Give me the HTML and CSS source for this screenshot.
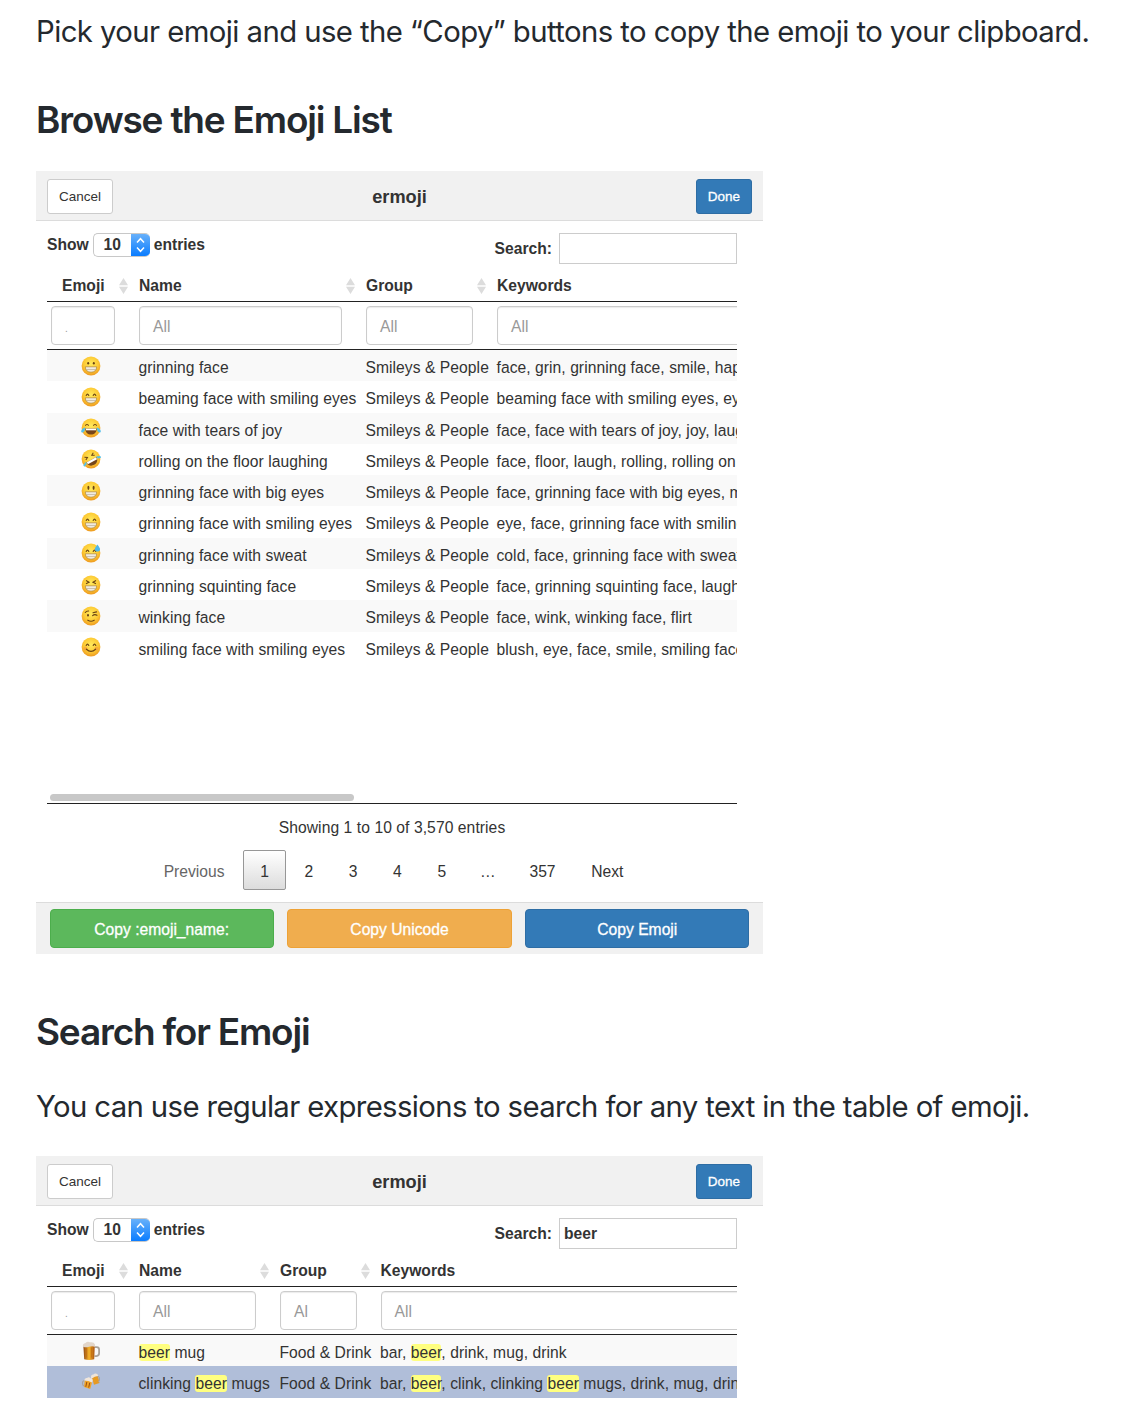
FILE: index.html
```html
<!DOCTYPE html>
<html lang="en">
<head>
<meta charset="utf-8">
<title>ermoji</title>
<link rel="stylesheet" href="styles.css">
</head>
<body>
<svg class="defs" width="0" height="0" aria-hidden="true">
  <defs>
    <radialGradient id="skin" cx=".5" cy=".38" r=".62"><stop offset="0" stop-color="#ffe95c"/><stop offset=".6" stop-color="#fdcb35"/><stop offset="1" stop-color="#ee9a20"/></radialGradient>
    <linearGradient id="ale" x1="0" x2="1"><stop offset="0" stop-color="#8f4512"/><stop offset=".5" stop-color="#f6b52b"/><stop offset="1" stop-color="#a8500f"/></linearGradient>
    <symbol id="face" viewBox="0 0 20 20"><circle cx="10" cy="10" r="9.4" fill="url(#skin)"/></symbol>
    <symbol id="grin" viewBox="0 0 20 20"><use href="#face"/><path d="M4.300 10.800h11.400c0 3.600-2.400 5.400-5.700 5.400s-5.700-1.800-5.700-5.400z" fill="#f1ece0" stroke="#a5752a" stroke-width=".6"/><path d="M5 13.500h10" stroke="#b9ad98" stroke-width=".7"/></symbol>
    <symbol id="arcs" viewBox="0 0 20 20"><path d="M5.200 8.400q1.300-2.500 2.600 0M12.200 8.400q1.300-2.500 2.600 0" fill="none" stroke="#6a4314" stroke-width="1.100" stroke-linecap="round"/></symbol>
    <symbol id="e1" viewBox="0 0 20 20"><use href="#grin"/><ellipse cx="7.200" cy="7.300" rx="1" ry="1.300" fill="#6a4314"/><ellipse cx="12.800" cy="7.300" rx="1" ry="1.300" fill="#6a4314"/></symbol>
    <symbol id="e2" viewBox="0 0 20 20"><use href="#grin"/><use href="#arcs"/></symbol>
    <symbol id="e3" viewBox="0 0 20 20"><use href="#face"/><path d="M4.300 10.500h11.400c0 4-2.400 6-5.700 6s-5.700-2-5.700-6z" fill="#76451a"/><path d="M5 10.600h10v1.700H5z" fill="#fff"/><path d="M4 7.500q2-2.200 4 0M12 7.500q2-2.200 4 0" fill="none" stroke="#6a4314" stroke-width="1"/><path d="M4.500 9.500C1.500 10-.2 12 .3 14c1.500 1.500 3.600.2 4.200-4.500zM15.500 9.500c3 .5 4.700 2.500 4.200 4.500-1.500 1.500-3.600.2-4.200-4.500z" fill="#55bfe9"/></symbol>
    <symbol id="e4" viewBox="0 0 20 20"><use href="#face"/><g transform="rotate(-28 10 10)"><path d="M4.300 10.800h11.400c0 3.800-2.400 5.800-5.700 5.800s-5.700-2-5.700-5.800z" fill="#76451a"/><path d="M4.800 10.800h10.400v2.300H4.800z" fill="#fff"/><path d="M5 5.500l2.600 1.500L5 8.500M15 5.500L12.400 7 15 8.500" fill="none" stroke="#6a4314" stroke-width="1"/><path d="M4.500 10L.3 11.800.5 13.600l3-.8zM15.500 10l4.200 1.800-.2 1.800-3-.8z" fill="#55bfe9"/></g></symbol>
    <symbol id="e5" viewBox="0 0 20 20"><use href="#grin"/><ellipse cx="7.400" cy="6.800" rx="1" ry="2.100" fill="#6a4314"/><ellipse cx="12.600" cy="6.800" rx="1" ry="2.100" fill="#6a4314"/></symbol>
    <symbol id="e7" viewBox="0 0 20 20"><use href="#grin"/><use href="#arcs"/><path d="M16.500 1.500c-1.600 2.300-2.900 3.500-2.700 5.200.3 2.100 4.300 2.600 5.200.2.500-1.800-1.200-3-2.500-5.400z" fill="#4fb8ea"/></symbol>
    <symbol id="e8" viewBox="0 0 20 20"><use href="#grin"/><path d="M5 5.600l3 1.600-3 1.500M15 5.600l-3 1.600 3 1.500" fill="none" stroke="#6a4314" stroke-width="1.100"/></symbol>
    <symbol id="e9" viewBox="0 0 20 20"><use href="#face"/><ellipse cx="7" cy="9.200" rx="1" ry="1.300" fill="#6a4314"/><path d="M4.300 6.500Q5.500 4.800 7.600 5M12 6.800l3.600-.9M11.600 9.700q2-2 4.400-.4M6.800 14.200q3.200 2 6.400 0" fill="none" stroke="#6a4314" stroke-width="1.100" stroke-linecap="round"/></symbol>
    <symbol id="e10" viewBox="0 0 20 20"><use href="#face"/><circle cx="4.500" cy="11.500" r="2" fill="#f58e3c" opacity=".5"/><circle cx="15.500" cy="11.500" r="2" fill="#f58e3c" opacity=".5"/><use href="#arcs"/><path d="M5.400 12.200q4.600 4.400 9.200 0" fill="none" stroke="#6a4314" stroke-width="1.200" stroke-linecap="round"/></symbol>
    <symbol id="mug" viewBox="0 0 20 20"><path d="M13.500 6.200h2.200q2.400 0 2.400 2.500v3.600q0 2.500-2.600 2.800h-2" fill="none" stroke="#aaa39b" stroke-width="1.800"/><path d="M2.300 4h11.500l-.6 14.300q-5 1.400-10 0z" fill="url(#ale)"/><path d="M5.600 6.500v10M10.400 6.500v10" stroke="#c26c12" stroke-width=".8"/><path d="M2 5.800Q1.300 2.500 4.500 2 6.500 0 9 1.300q4-.6 5 2.200v2.300q-3-1.200-6 0-3 1-6 0z" fill="#e2d6ca"/></symbol>
    <symbol id="mugs" viewBox="0 0 20 20"><path d="M10.500 4.500l6-2 2 8.500-5.500 1.800z" fill="#e79a22"/><path d="M16.200 4q2.600.3 2.400 3t-1.500 3" fill="none" stroke="#a9a39d" stroke-width="1"/><path d="M9.800 5.500Q10 2.500 12.300 2.600 14 .8 15.500 1.800q2 .2 1.500 2.200-3.200.3-6.500 2.800z" fill="#efe4d8"/><path d="M3.800 8l7.400 1.700-2 7.300-6.200-1.900z" fill="#f0a326"/><path d="M5.800 10l-1 4.800M8.700 10.800l-1 4.800" stroke="#9b4f10" stroke-width="1"/><path d="M3.500 8.500q-2.300.5-2 3t1.700 2.500" fill="none" stroke="#a9a39d" stroke-width="1.100"/><path d="M3.300 8.500Q3.500 5.600 6 6q2-1.400 3.400.2 2.700.2 2.200 2.800l-.6 1.500Q7.500 8.600 3.300 8.500z" fill="#f1e6da"/></symbol>
    <symbol id="sort" viewBox="0 0 9 16"><path d="M0 7.300L4.500 0 9 7.300zM0 8.800h9L4.500 16z" fill="#dcdcdc"/></symbol>
    <symbol id="updown" viewBox="0 0 19 23"><path d="M6 9l3.500-3.800L13 9M6 14l3.500 3.800L13 14" fill="none" stroke="#fff" stroke-width="1.500"/></symbol>
  </defs>
</svg>

<main class="page">
  <p class="lead lead-copy">Pick your emoji and use the “Copy” buttons to copy the emoji to your clipboard.</p>
  <h2 class="title title-browse">Browse the Emoji List</h2>

  <section class="gadget browse">
    <header class="gadget-head">
      <button class="btn">Cancel</button>
      <h3 class="gadget-title">ermoji</h3>
      <button class="btn btn-done">Done</button>
    </header>
    <div class="gadget-body">
      <div class="controls">
        <div class="length">Show <span class="select"><span class="select-value">10</span><svg class="select-arrow"><use href="#updown"/></svg></span> entries</div>
        <div class="search">Search: <div class="search-box"></div></div>
      </div>
      <div class="row head">
        <div class="th th-emoji">Emoji<svg class="sort"><use href="#sort"/></svg></div>
        <div class="th">Name<svg class="sort"><use href="#sort"/></svg></div>
        <div class="th">Group<svg class="sort"><use href="#sort"/></svg></div>
        <div class="th">Keywords</div>
      </div>
      <div class="row filters">
        <div class="filter filter-emoji"><span class="dot">.</span></div>
        <div class="filter">All</div>
        <div class="filter">All</div>
        <div class="filter filter-wide">All</div>
      </div>
      <div class="rows">
        <div class="row item"><svg class="emoji"><use href="#e1"/></svg><span>grinning face</span><span>Smileys &amp; People</span><span>face, grin, grinning face, smile, happy</span></div>
        <div class="row item"><svg class="emoji"><use href="#e2"/></svg><span>beaming face with smiling eyes</span><span>Smileys &amp; People</span><span>beaming face with smiling eyes, eye</span></div>
        <div class="row item"><svg class="emoji"><use href="#e3"/></svg><span>face with tears of joy</span><span>Smileys &amp; People</span><span>face, face with tears of joy, joy, laugh</span></div>
        <div class="row item"><svg class="emoji"><use href="#e4"/></svg><span>rolling on the floor laughing</span><span>Smileys &amp; People</span><span>face, floor, laugh, rolling, rolling on</span></div>
        <div class="row item"><svg class="emoji"><use href="#e5"/></svg><span>grinning face with big eyes</span><span>Smileys &amp; People</span><span>face, grinning face with big eyes, mouth</span></div>
        <div class="row item"><svg class="emoji"><use href="#e2"/></svg><span>grinning face with smiling eyes</span><span>Smileys &amp; People</span><span>eye, face, grinning face with smiling</span></div>
        <div class="row item"><svg class="emoji"><use href="#e7"/></svg><span>grinning face with sweat</span><span>Smileys &amp; People</span><span>cold, face, grinning face with sweat</span></div>
        <div class="row item"><svg class="emoji"><use href="#e8"/></svg><span>grinning squinting face</span><span>Smileys &amp; People</span><span>face, grinning squinting face, laugh</span></div>
        <div class="row item"><svg class="emoji"><use href="#e9"/></svg><span>winking face</span><span>Smileys &amp; People</span><span>face, wink, winking face, flirt</span></div>
        <div class="row item"><svg class="emoji"><use href="#e10"/></svg><span>smiling face with smiling eyes</span><span>Smileys &amp; People</span><span>blush, eye, face, smile, smiling face</span></div>
      </div>
      <div class="scrollbar"><div class="thumb"></div></div>
      <div class="info">Showing 1 to 10 of 3,570 entries</div>
      <nav class="pages">
        <span class="pg pg-off">Previous</span><span class="pg pg-on">1</span><span class="pg">2</span><span class="pg">3</span><span class="pg">4</span><span class="pg">5</span><span class="pg pg-dots">…</span><span class="pg">357</span><span class="pg">Next</span>
      </nav>
    </div>
    <footer class="gadget-foot">
      <button class="copy copy-name">Copy :emoji_name:</button>
      <button class="copy copy-unicode">Copy Unicode</button>
      <button class="copy copy-emoji">Copy Emoji</button>
    </footer>
  </section>

  <h2 class="title title-search">Search for Emoji</h2>
  <p class="lead lead-regex">You can use regular expressions to search for any text in the table of emoji.</p>

  <section class="gadget found">
    <header class="gadget-head">
      <button class="btn">Cancel</button>
      <h3 class="gadget-title">ermoji</h3>
      <button class="btn btn-done">Done</button>
    </header>
    <div class="gadget-body">
      <div class="controls">
        <div class="length">Show <span class="select"><span class="select-value">10</span><svg class="select-arrow"><use href="#updown"/></svg></span> entries</div>
        <div class="search">Search: <div class="search-box">beer</div></div>
      </div>
      <div class="row head">
        <div class="th th-emoji">Emoji<svg class="sort"><use href="#sort"/></svg></div>
        <div class="th">Name<svg class="sort"><use href="#sort"/></svg></div>
        <div class="th">Group<svg class="sort"><use href="#sort"/></svg></div>
        <div class="th">Keywords</div>
      </div>
      <div class="row filters">
        <div class="filter filter-emoji"><span class="dot">.</span></div>
        <div class="filter">All</div>
        <div class="filter">Al</div>
        <div class="filter filter-wide">All</div>
      </div>
      <div class="rows">
        <div class="row item"><svg class="emoji"><use href="#mug"/></svg><span><mark>beer</mark> mug</span><span>Food &amp; Drink</span><span>bar, <mark>beer</mark>, drink, mug, drink</span></div>
        <div class="row item selected"><svg class="emoji"><use href="#mugs"/></svg><span>clinking <mark>beer</mark> mugs</span><span>Food &amp; Drink</span><span>bar, <mark>beer</mark>, clink, clinking <mark>beer</mark> mugs, drink, mug, drink</span></div>
      </div>
    </div>
  </section>
</main>
</body>
</html>
```
FILE: styles.css
```css
* { box-sizing: border-box; }
body { margin: 0; background: #fff; }
.defs { display: block; }
.page { height: 1412px; padding: 9px 36px 0; overflow: hidden; color: #24292e; font-family: Inter, sans-serif; }

.lead { margin: 0; font-size: 29.300px; line-height: 46px; white-space: nowrap; }
.lead-copy { letter-spacing: -0.570px; }
.lead-regex { letter-spacing: -0.620px; margin-bottom: 26.500px; }
.title { margin: 0; font-size: 37px; font-weight: 600; line-height: 46px; white-space: nowrap; letter-spacing: -1.200px; }
.title-browse { margin: 42px 0 28px; }
.title-search { margin: 55px 0 28.500px; }

.gadget { width: 727px; color: #333; font: 15.650px/20px "Liberation Sans", Arial, sans-serif; }
.browse { --cols: 92px 227px 131px 1fr; }
.found { --cols: 92px 141px 100.500px 1fr; }

.gadget-head { display: flex; align-items: center; justify-content: space-between; height: 50px; padding: 1px 11px 0; background: #f1f1f1; border-bottom: 1px solid #dcdcdc; }
.gadget-title { margin: 1px 10px 0 0; font-size: 18.200px; font-weight: 700; }
.btn { height: 35px; width: 66px; padding: 0; background: #fff; border: 1px solid #ccc; border-radius: 3px; color: #333; font: 13.500px "Liberation Sans", Arial, sans-serif; }
.btn-done { width: 56px; background: #337ab7; border-color: #2e6da4; color: #fff; -webkit-text-stroke: 0.3px #fff; }

.gadget-body { width: 701px; padding-left: 11px; }
.controls { display: flex; justify-content: space-between; height: 50px; padding-top: 12px; font-weight: 700; }
.length { display: flex; align-items: center; gap: 4px; height: 24px; }
.select { display: flex; width: 57px; height: 24px; border: 1px solid #c8c8c8; border-right: 0; border-radius: 5px; overflow: hidden; }
.select-value { flex: 1; text-align: center; line-height: 22px; }
.select-arrow { width: 19px; height: 24px; margin: -1px 0; background: linear-gradient(#6cb3fa, #067aff); }
.search { display: flex; align-items: center; gap: 7px; height: 31px; }
.search-box { width: 178px; height: 31px; padding: 0 4px; border: 1px solid #ccc; line-height: 29px; }

.row { display: grid; grid-template-columns: var(--cols); white-space: nowrap; overflow: hidden; }
.head { height: 31px; border-bottom: 1.500px solid #222; align-items: center; font-weight: 700; }
.th { display: flex; align-items: center; justify-content: space-between; padding-right: 11px; }
.th-emoji { padding-left: 15px; }
.sort { width: 9px; height: 16px; }
.filters { height: 48px; padding-top: 4px; border-bottom: 1.500px solid #222; }
.filter { height: 39px; margin-right: 24px; padding-left: 13px; border: 1.500px solid #ccc; border-radius: 4px; box-shadow: inset 0 1px 1px rgba(0, 0, 0, 0.08); line-height: 39px; color: #999; }
.filter-emoji { margin-left: 4px; }
.filter-wide { margin-right: -10px; }
.dot { font-size: 10px; }
.browse .rows { height: 444px; }
.item { height: 31.300px; line-height: 35px; letter-spacing: 0.050px; }
.item:nth-child(odd) { background: #f9f9f9; }
.item.selected { background: #b0bed9; }
.item > span { margin-left: -0.500px; }
.emoji { width: 20px; height: 20px; margin: 5.500px 0 0 34px; }
mark { background: #ffff80; color: inherit; border-radius: 3px; }

.scrollbar { height: 10px; border-bottom: 1.500px solid #222; }
.thumb { width: 304px; height: 7px; margin-left: 2.500px; border-radius: 4px; background: #c8c8c8; }
.info { height: 46px; padding-top: 14px; text-align: center; letter-spacing: 0.070px; }
.pages { display: flex; justify-content: center; gap: 2.200px; height: 52px; margin-left: 3px; }
.pg { height: 40px; padding: 0 16.700px; line-height: 43px; }
.pg-off { color: #666; }
.pg-on { padding: 0 15.800px; border: 1px solid #979797; border-radius: 2px; background: linear-gradient(#fff, #dcdcdc); line-height: 41px; }
.pg-dots { padding: 0 15px; }

.gadget-foot { display: grid; grid-template-columns: repeat(3, 1fr); gap: 13.500px; height: 52px; padding: 6px 13.500px; background: #f1f1f1; border-top: 1px solid #dcdcdc; }
.copy { height: 39px; padding: 2px 0 0; border: 1px solid; border-radius: 4px; color: #fff; font: 15.650px "Liberation Sans", Arial, sans-serif; -webkit-text-stroke: 0.300px #fff; }
.copy-name { background: #5cb85c; border-color: #4cae4c; }
.copy-unicode { background: #f0ad4e; border-color: #eea236; }
.copy-emoji { background: #337ab7; border-color: #2e6da4; }
```
